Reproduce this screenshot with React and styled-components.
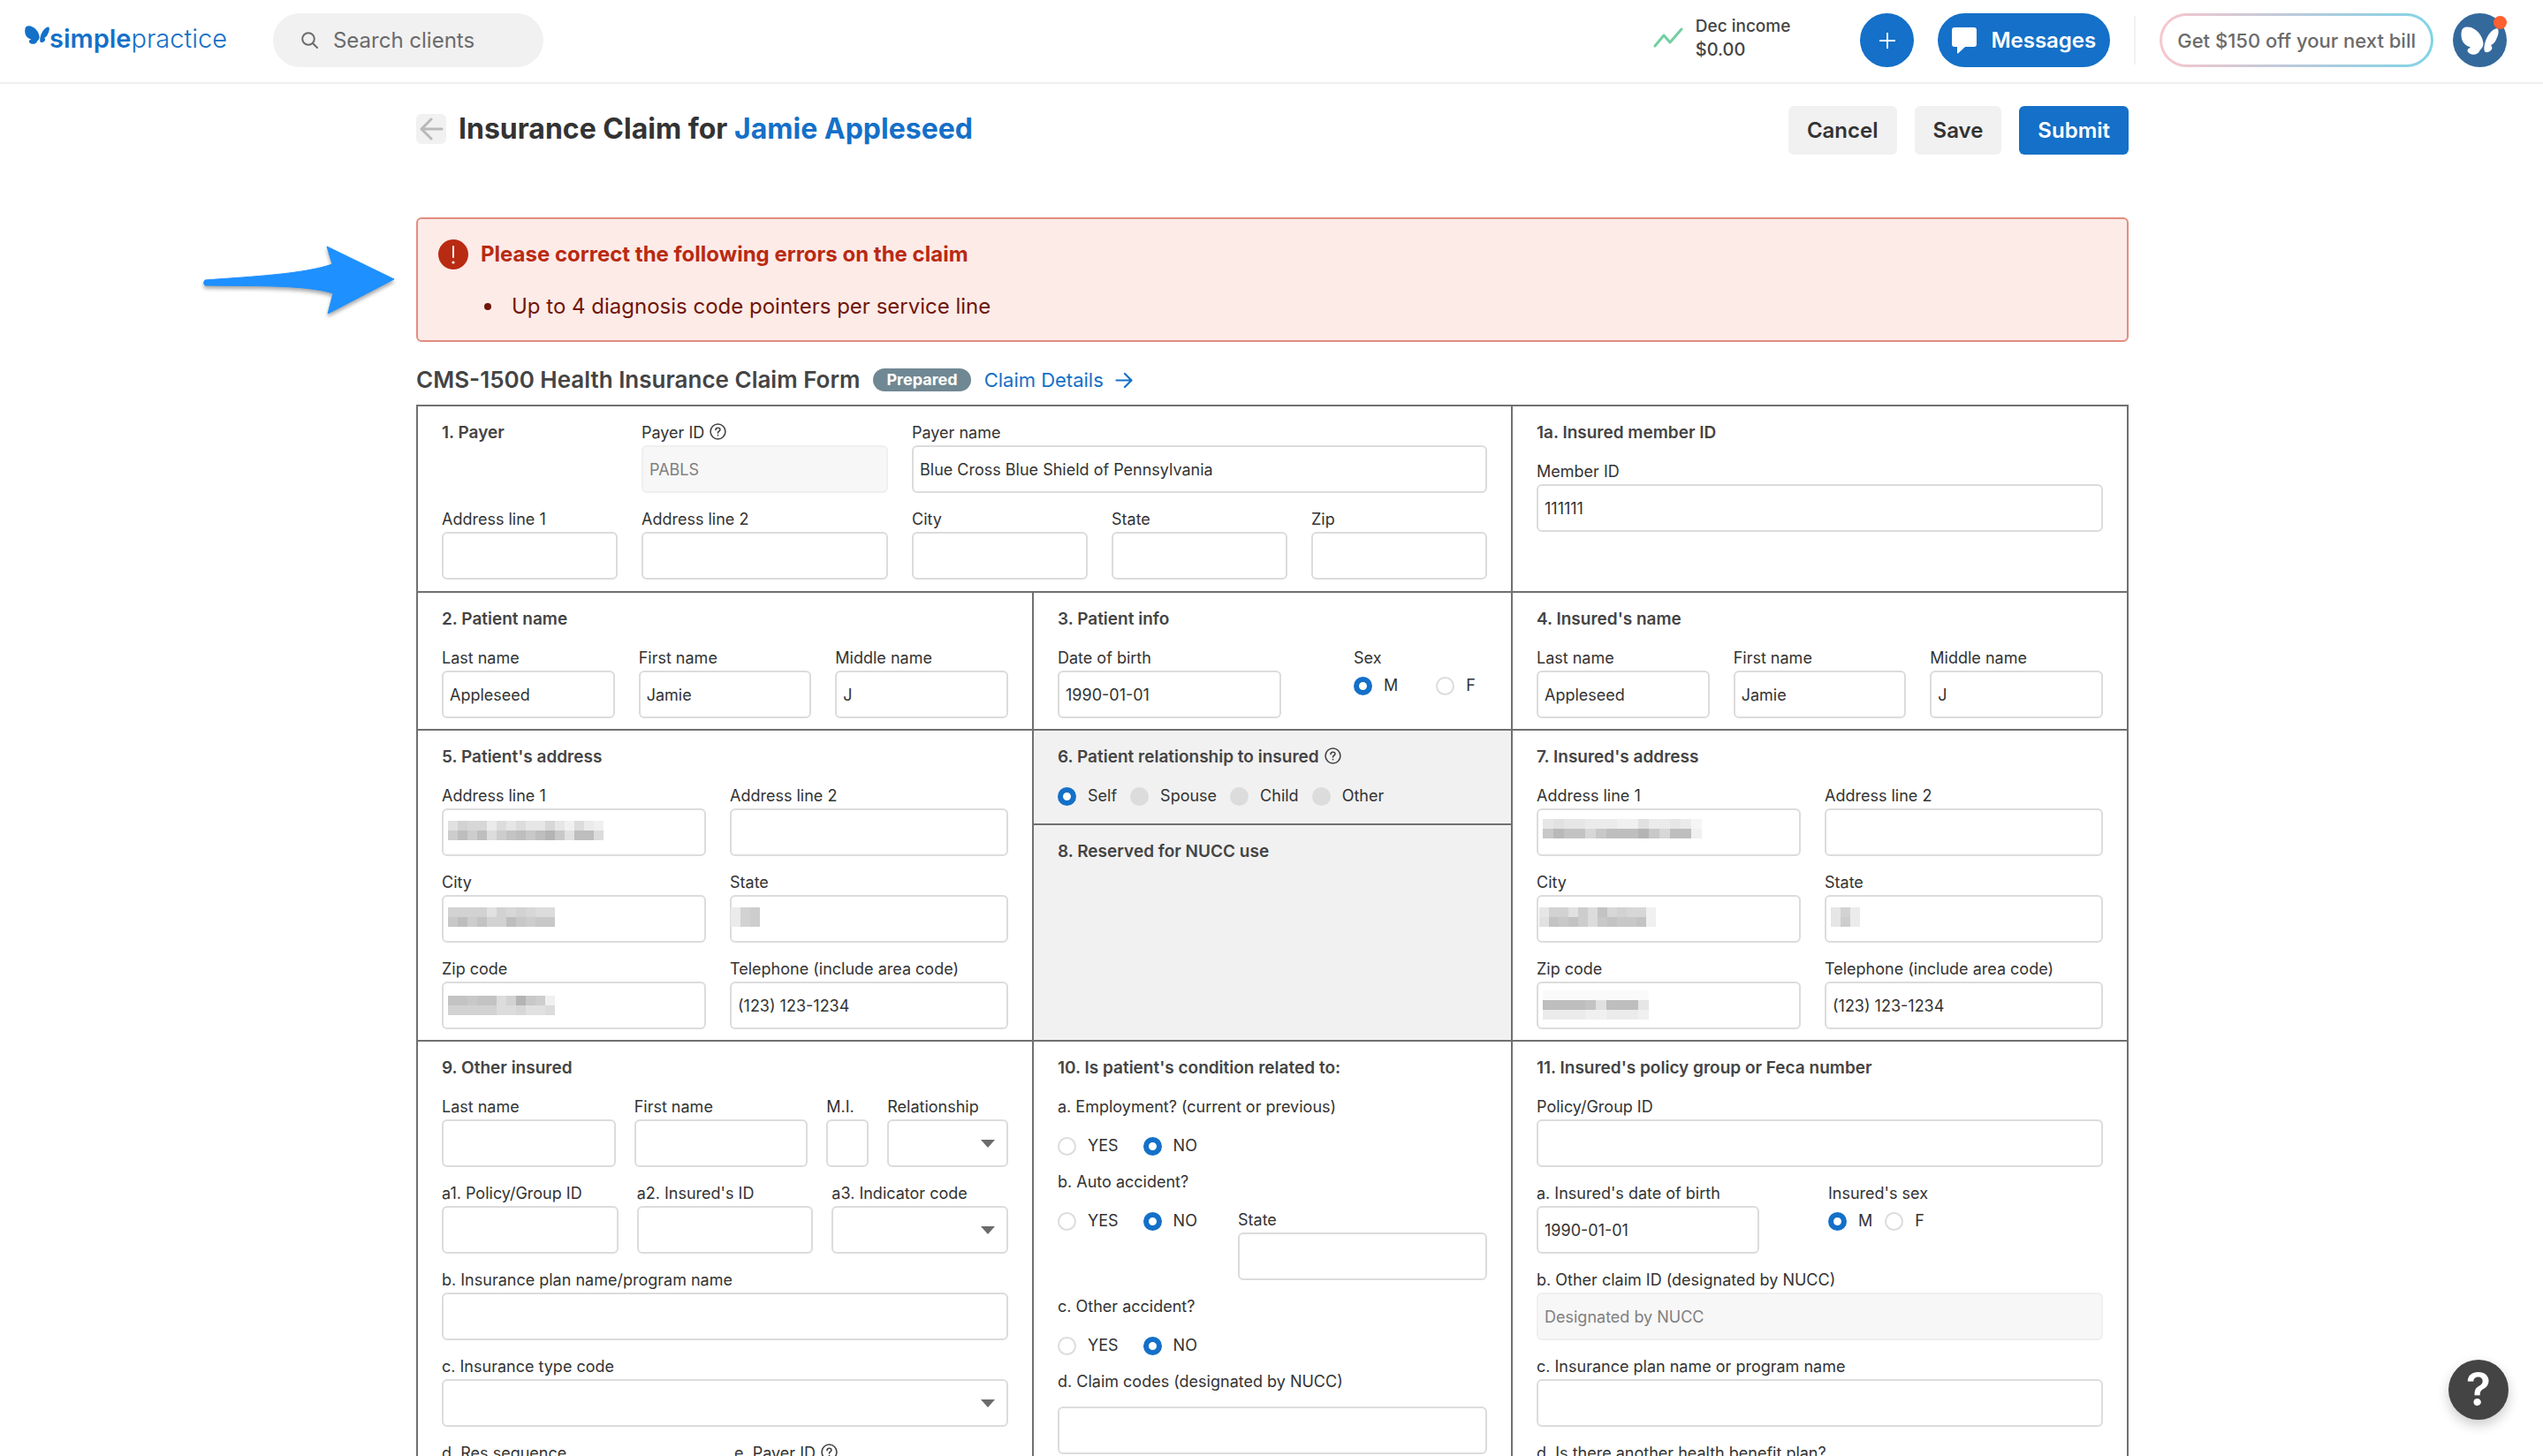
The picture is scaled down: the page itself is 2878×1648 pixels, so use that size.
import React, { useId } from 'react'
import styled, { createGlobalStyle, css } from 'styled-components'

const GlobalStyle = createGlobalStyle`
  :root {
    --blue: #1470c8;
    --ink: #333;
    --heading: #444;
    --muted: #6b6b6b;
    --line: #707070;
    --field-line: #dcdcdc;
    --panel: #f1f1f1;
  }
  * { box-sizing: border-box; }
  body {
    margin: 0;
    background: #fff;
    color: var(--ink);
    font-family: Inter, "Liberation Sans", sans-serif;
  }
  button, input, select { font-family: inherit; }
  a { color: var(--blue); text-decoration: none; }
`

const Shell = styled.div`
  display: flex;
  flex-direction: column;
  height: 100vh;
  overflow: hidden;
`

/* ---------- top bar ---------- */

const TopBar = styled.header`
  display: flex;
  flex: none;
  align-items: center;
  padding: 15px 41px 17px 28px;
  border-bottom: 2px solid #efefef;
`

const Logo = styled.a`
  display: flex;
  align-items: center;
  margin-right: 52px;
  padding-bottom: 3px;
  font-size: 29px;
  line-height: 36px;
  svg {
    width: 28px;
    height: 21px;
    margin-bottom: 9px;
  }
  strong { font-weight: 600; }
  span { font-weight: 300; }
`

const SearchBox = styled.div`
  display: flex;
  align-items: center;
  gap: 17px;
  width: 306px;
  height: 61px;
  padding: 0 28px 0 32px;
  border-radius: 31px;
  background: var(--panel);
  svg { flex: none; }
  input {
    width: 100%;
    min-width: 0;
    padding: 0;
    border: 0;
    outline: 0;
    background: none;
    font-size: 24px;
  }
  input::placeholder { color: var(--muted); opacity: 1; }
`

const TopActions = styled.div`
  display: flex;
  align-items: center;
  margin-left: auto;
`

const Income = styled.div`
  display: flex;
  align-items: center;
  gap: 14px;
  margin-right: 79px;
  padding-bottom: 6px;
  color: var(--heading);
  font-size: 19px;
  font-weight: 500;
  line-height: 27px;
  div div:last-child { font-size: 20px; }
`

const RoundButton = styled.button`
  display: flex;
  align-items: center;
  justify-content: center;
  gap: 16px;
  height: 61px;
  min-width: 61px;
  padding: ${props => props.$wide ? '0 16px' : '0'};
  border: 0;
  border-radius: 31px;
  background: var(--blue);
  color: #fff;
  font-size: 24px;
  font-weight: 600;
  & + & { margin-left: 27px; }
`

const Divider = styled.div`
  width: 2px;
  height: 55px;
  margin: 0 27px;
  background: #f1f1f1;
`

const OfferButton = styled.button`
  height: 61px;
  padding: 0 17px;
  border: 3px solid transparent;
  border-radius: 31px;
  background:
    linear-gradient(#fff, #fff) padding-box,
    linear-gradient(90deg, #f9c6cc, #b9cadb 50%, #7fd4e6) border-box;
  color: var(--muted);
  font-size: 22px;
  font-weight: 500;
`

const Avatar = styled.button`
  position: relative;
  display: flex;
  align-items: center;
  justify-content: center;
  width: 61px;
  height: 61px;
  margin-left: 22px;
  padding: 0;
  border: 0;
  border-radius: 50%;
  background: #34699c;
  color: #fff;
  svg { width: 43px; height: 32px; }
  &::after {
    content: '';
    position: absolute;
    top: 3px;
    right: 0;
    width: 15px;
    height: 15px;
    border-radius: 50%;
    background: #ff6030;
  }
`

/* ---------- page ---------- */

const Page = styled.main`
  flex: 1;
  min-height: 0;
  overflow-y: auto;
  scrollbar-width: none;
`

const Container = styled.div`
  max-width: 1978px;
  margin: 0 auto;
  padding: 25px 19px 40px 21px;
`

const TitleRow = styled.div`
  display: flex;
  align-items: center;
  gap: 14px;
  margin-bottom: 71px;
  h1 {
    margin: 0 auto 4px 0;
    color: var(--ink);
    font-size: 32px;
    font-weight: 700;
    line-height: 40px;
  }
`

const BackButton = styled.button`
  display: flex;
  align-items: center;
  justify-content: center;
  width: 34px;
  height: 34px;
  margin-bottom: 3px;
  padding: 0;
  border: 0;
  border-radius: 6px;
  background: var(--panel);
`

const ButtonGroup = styled.div`
  display: flex;
  gap: 20px;
`

const ActionButton = styled.button`
  height: 55px;
  padding: 0 21px;
  border: 0;
  border-radius: 6px;
  background: ${props => props.$primary ? 'var(--blue)' : 'var(--panel)'};
  color: ${props => props.$primary ? '#fff' : 'var(--ink)'};
  font-size: 24px;
  font-weight: 600;
`

const ErrorBox = styled.section`
  position: relative;
  padding: 22px 23px 23px;
  border: 2px solid #e28d80;
  border-radius: 6px;
  background: #fdebe8;
  h2 {
    display: flex;
    align-items: center;
    gap: 14px;
    margin: 0 0 26px;
    color: #b92a12;
    font-size: 24px;
    font-weight: 700;
    line-height: 36px;
  }
  ul {
    margin: 0;
    padding-left: 52px;
    color: #70160a;
    font-size: 24px;
    line-height: 30px;
    list-style: none;
  }
  li {
    display: flex;
    align-items: center;
    gap: 23px;
  }
  li::before {
    content: '';
    width: 8px;
    height: 8px;
    border-radius: 50%;
    background: currentColor;
  }
`

/* callout arrow that sits outside the left edge of the alert */
const Pointer = styled.svg`
  position: absolute;
  top: 28px;
  left: -246px;
  filter: drop-shadow(0 3px 2px rgba(0, 0, 0, 0.35));
`

const FormTitle = styled.div`
  display: flex;
  align-items: center;
  gap: 15px;
  margin: 27px 0 12px;
  h2 {
    margin: 0;
    color: var(--heading);
    font-size: 26px;
    font-weight: 600;
    line-height: 32px;
  }
  a {
    display: flex;
    align-items: center;
    gap: 13px;
    font-size: 22px;
  }
`

const Badge = styled.span`
  padding: 0 15px;
  border-radius: 13px;
  background: #708893;
  color: #fff;
  font-size: 18px;
  font-weight: 700;
  line-height: 26px;
`

/* ---------- claim form ---------- */

// the 2px gaps let the grid background through as the ruled lines
const ClaimForm = styled.form`
  display: grid;
  grid-template-columns: minmax(0, 695fr) minmax(0, 540fr) minmax(0, 695fr);
  gap: 2px;
  border: 2px solid var(--line);
  background: var(--line);
`

const Cell = styled.section`
  grid-column: span ${props => props.$span || 1};
  padding: 19px 27px ${props => props.$bottom || 12}px;
  background: ${props => props.$shaded ? 'var(--panel)' : '#fff'};
`

const SplitCell = styled.div`
  display: flex;
  flex-direction: column;
  gap: 2px;
  ${Cell}:last-child { flex: 1; }
`

const CellTitle = styled.h3`
  display: flex;
  gap: 6px;
  margin: 0 0 ${props => props.$inline ? 0 : 22}px;
  color: var(--heading);
  font-size: 19px;
  font-weight: 600;
  line-height: 22px;
`

const Stack = styled.div`
  display: grid;
  gap: 19px;
`

const Row = styled.div`
  display: grid;
  grid-template-columns: ${props => props.$cols};
  column-gap: ${props => props.$gap || 27}px;
  row-gap: 19px;
`

const FieldBox = styled.div`
  grid-column: span ${props => props.$span || 1};
  min-width: 0;
`

const labelText = css`
  color: var(--ink);
  font-size: 18px;
  line-height: 22px;
`

const Label = styled.label`
  ${labelText}
  display: flex;
  gap: 6px;
  margin-bottom: 3px;
  white-space: nowrap;
`

const Control = styled.div`
  position: relative;
`

const controlStyle = css`
  display: block;
  width: 100%;
  height: 54px;
  padding: 0 7px;
  border: 2px solid var(--field-line);
  border-radius: 6px;
  background: #fff;
  color: var(--ink);
  font-size: 18px;
`

const TextInput = styled.input`
  ${controlStyle}
  &:disabled {
    border-color: #efefef;
    background: #f7f7f7;
    color: #808080;
  }
`

const SelectInput = styled.select`
  ${controlStyle}
  appearance: none;
`

const Caret = styled.svg`
  position: absolute;
  top: 23px;
  right: 15px;
  pointer-events: none;
`

const Mosaic = styled.svg`
  position: absolute;
  top: ${props => props.$top}px;
  left: ${props => props.$left}px;
`

const RadioGroup = styled.fieldset`
  min-width: 0;
  margin: 0;
  padding: 0;
  border: 0;
  legend {
    ${labelText}
    margin-bottom: ${props => props.$legendGap}px;
    padding: 0;
    white-space: nowrap;
  }
`

const RadioItems = styled.div`
  display: flex;
  gap: ${props => props.$gap}px;
`

const RadioLabel = styled.label`
  ${labelText}
  display: flex;
  align-items: center;
  gap: 13px;
  input {
    appearance: none;
    width: 21px;
    height: 21px;
    margin: 0;
    border: 2px solid var(--field-line);
    border-radius: 50%;
    background: #fff;
  }
  input:checked { border: 6px solid var(--blue); }
  input:disabled { background: var(--field-line); }
`

const AccidentRow = styled.div`
  display: grid;
  grid-template-columns: 204fr 282fr;
`

const AccidentState = styled.div`
  padding-top: 43px;
`

const ClaimCodes = styled.div`
  ${Label} { margin-bottom: 17px; }
`

const HelpButton = styled.button`
  position: fixed;
  right: 39px;
  bottom: 41px;
  width: 68px;
  height: 68px;
  padding: 0;
  border: 0;
  border-radius: 50%;
  background: #444;
  box-shadow: 0 6px 14px rgba(0, 0, 0, 0.2);
  color: #fff;
  font-size: 52px;
  font-weight: 600;
  line-height: 68px;
`

/* ---------- icons ---------- */

const Butterfly = () => (
  <svg viewBox="76 76 128 96" fill="currentColor" aria-hidden="true">
    <path d="M78 92C80 78 95 74 112 80C136 90 150 112 152 134C152 144 146 152 140 157C136 168 126 172 116 171C104 170 97 163 98 156C100 150 106 150 109 146C92 142 72 128 78 92Z" />
    <path d="M198 83C206 84 204 102 198 114C193 128 186 136 178 139C180 144 184 148 180 154C176 161 164 166 158 162C153 158 154 144 158 130C165 106 182 84 198 83Z" />
  </svg>
)

const SearchIcon = () => (
  <svg width="19" height="19" viewBox="0 0 19 19" fill="none" stroke="#6b6b6b" strokeWidth="2" strokeLinecap="round">
    <circle cx="8" cy="8" r="6.8" />
    <path d="M13 13L18 18" />
  </svg>
)

const TrendIcon = () => (
  <svg width="34" height="23" viewBox="0 0 34 23" fill="none" stroke="#72cfa2" strokeWidth="3" strokeLinejoin="round" strokeLinecap="round">
    <path d="M2 21L12 9L19 17L32 2" />
  </svg>
)

const BubbleIcon = () => (
  <svg width="28" height="30" viewBox="0 0 28 30" fill="#fff">
    <path d="M3 0H25Q28 0 28 3V19Q28 22 25 22H15L7 29.500Q6 30 6 28V22H3Q0 22 0 19V3Q0 0 3 0Z" />
  </svg>
)

const PlusIcon = () => (
  <svg width="20" height="20" viewBox="0 0 20 20" stroke="#fff" strokeWidth="2">
    <path d="M10 1V19M1 10H19" />
  </svg>
)

const BackIcon = () => (
  <svg width="28" height="26" viewBox="0 0 28 26" fill="none" stroke="#b9b9b9" strokeWidth="3" strokeLinecap="round" strokeLinejoin="round">
    <path d="M14 2L3 13L14 24M3 13H26" />
  </svg>
)

const ArrowRight = () => (
  <svg width="20" height="19" viewBox="0 0 20 19" fill="none" stroke="currentColor" strokeWidth="2.200" strokeLinecap="round" strokeLinejoin="round">
    <path d="M1.500 9.500H18M11 2L18.500 9.500L11 17" />
  </svg>
)

const AlertIcon = () => (
  <svg width="34" height="34" viewBox="0 0 34 34">
    <circle cx="17" cy="17" r="17" fill="#b92a12" />
    <path d="M17 8V20" stroke="#fff" strokeWidth="2" strokeLinecap="round" />
    <circle cx="17" cy="26" r="1.600" fill="#fff" />
  </svg>
)

const HintIcon = () => (
  <svg width="19" height="19" viewBox="0 0 18 18" fill="none" stroke="#444" strokeWidth="1.500">
    <circle cx="9" cy="9" r="8" />
    <path d="M6.600 7.200Q6.700 4.900 9 4.900Q11.300 4.900 11.300 6.800Q11.300 8 10 8.800Q9 9.400 9 10.500" strokeLinecap="round" />
    <circle cx="9" cy="12.900" r="0.900" fill="#444" stroke="none" />
  </svg>
)

/* ---------- fields ---------- */

// rows are strings of hex digits, one grey level for each block
function Redacted({ rows, left = 7, top = 14, size = 11 }) {
  return (
    <Mosaic
      $left={left}
      $top={top}
      width={rows[0].length * size}
      height={rows.length * 11}
      shapeRendering="crispEdges"
    >
      {rows.map((row, y) => [...row].map((level, x) => {
        const grey = 180 + parseInt(level, 16) * 5
        return (
          <rect key={`${x}-${y}`} x={x * size} y={y * 11} width={size} height="11" fill={`rgb(${grey},${grey},${grey})`} />
        )
      }))}
    </Mosaic>
  )
}

function Field({ label, value, span, disabled, hint, options, redacted }) {
  const id = useId()
  return (
    <FieldBox $span={span}>
      <Label htmlFor={id}>{label}{hint && <HintIcon />}</Label>
      <Control>
        {options ? (
          <>
            <SelectInput id={id} defaultValue=""><option value=""></option></SelectInput>
            <Caret width="16" height="9" viewBox="0 0 16 9" fill="#6b6b6b"><path d="M0 0H16L8 9Z" /></Caret>
          </>
        ) : (
          <TextInput id={id} type="text" defaultValue={value} disabled={disabled} />
        )}
        {redacted && <Redacted {...redacted} />}
      </Control>
    </FieldBox>
  )
}

function Radios({ legend, legendGap = 9, gap, name, options, checked, disabled }) {
  return (
    <RadioGroup $legendGap={legendGap} aria-label={legend ? undefined : name}>
      {legend && <legend>{legend}</legend>}
      <RadioItems $gap={gap}>
        {options.map(option => (
          <RadioLabel key={option}>
            <input
              type="radio"
              name={name}
              defaultChecked={option === checked}
              disabled={disabled && option !== checked}
            />
            {option}
          </RadioLabel>
        ))}
      </RadioItems>
    </RadioGroup>
  )
}

function YesNo({ legend, name }) {
  return <Radios legend={legend} legendGap={22} name={name} options={['YES', 'NO']} checked="NO" gap={28} />
}

function NameCell({ title }) {
  return (
    <Cell>
      <CellTitle>{title}</CellTitle>
      <Row $cols="repeat(3, minmax(0, 1fr))">
        <Field label="Last name" value="Appleseed" />
        <Field label="First name" value="Jamie" />
        <Field label="Middle name" value="J" />
      </Row>
    </Cell>
  )
}

function AddressCell({ title, line, city, state, zip }) {
  return (
    <Cell>
      <CellTitle>{title}</CellTitle>
      <Row $cols="minmax(0, 299fr) minmax(0, 315fr)">
        <Field label="Address line 1" redacted={line} />
        <Field label="Address line 2" />
        <Field label="City" redacted={city} />
        <Field label="State" redacted={state} />
        <Field label="Zip code" redacted={zip} />
        <Field label="Telephone (include area code)" value="(123) 123-1234" />
      </Row>
    </Cell>
  )
}

const patientAddress = {
  line: { rows: ['9677b8a8aa7ac8bc', '5252853242049228'] },
  city: { rows: ['66669676788', '42536624544'] },
  state: { rows: ['b65', 'b65'], left: 1 },
  zip: { rows: ['3343386045c', '66666887998'], top: 16 },
}

const insuredAddress = {
  line: { rows: ['a9aabbbcc9bbabd', '41337422204722c'], top: 12, size: 12 },
  city: { rows: ['a6695837677c', '93435843443c'], left: 3 },
  state: { rows: ['a6b', 'a5b'], left: 7 },
  zip: { rows: ['eeeeeeeeee', '222239222a', 'bbbbccbbbc'], top: 10, size: 12 },
}

function Header() {
  return (
    <TopBar>
      <Logo href="#">
        <Butterfly />
        <strong>simple</strong><span>practice</span>
      </Logo>
      <SearchBox>
        <SearchIcon />
        <input type="search" placeholder="Search clients" aria-label="Search clients" />
      </SearchBox>
      <TopActions>
        <Income>
          <TrendIcon />
          <div>
            <div>Dec income</div>
            <div>$0.00</div>
          </div>
        </Income>
        <RoundButton type="button" aria-label="Add"><PlusIcon /></RoundButton>
        <RoundButton type="button" $wide><BubbleIcon />Messages</RoundButton>
        <Divider />
        <OfferButton type="button">Get $150 off your next bill</OfferButton>
        <Avatar type="button" aria-label="Account"><Butterfly /></Avatar>
      </TopActions>
    </TopBar>
  )
}

export default function App() {
  return (
    <Shell>
      <GlobalStyle />
      <Header />
      <Page>
        <Container>
          <TitleRow>
            <BackButton type="button" aria-label="Back"><BackIcon /></BackButton>
            <h1>Insurance Claim for <a href="#">Jamie Appleseed</a></h1>
            <ButtonGroup>
              <ActionButton type="button">Cancel</ActionButton>
              <ActionButton type="button">Save</ActionButton>
              <ActionButton type="button" $primary>Submit</ActionButton>
            </ButtonGroup>
          </TitleRow>

          <ErrorBox>
            <Pointer width="228" height="84" viewBox="0 0 228 84" fill="#1e90ff">
              <path d="M5 41C60 37 118 34 149 23L143 3L219 40L144 79L150 56C118 46 60 48 5 47Q2 44 5 41Z" stroke="#1e90ff" strokeLinejoin="round" />
            </Pointer>
            <h2><AlertIcon />Please correct the following errors on the claim</h2>
            <ul>
              <li>Up to 4 diagnosis code pointers per service line</li>
            </ul>
          </ErrorBox>

          <FormTitle>
            <h2>CMS-1500 Health Insurance Claim Form</h2>
            <Badge>Prepared</Badge>
            <a href="#">Claim Details <ArrowRight /></a>
          </FormTitle>

          <ClaimForm>
            <Cell $span={2} $bottom={13}>
              <Row $cols="minmax(0, 199fr) minmax(0, 279fr) repeat(3, minmax(0, 199fr))">
                <CellTitle $inline>1. Payer</CellTitle>
                <Field label="Payer ID" value="PABLS" hint disabled />
                <Field label="Payer name" value="Blue Cross Blue Shield of Pennsylvania" span={3} />
                <Field label="Address line 1" />
                <Field label="Address line 2" />
                <Field label="City" />
                <Field label="State" />
                <Field label="Zip" />
              </Row>
            </Cell>
            <Cell>
              <CellTitle>1a. Insured member ID</CellTitle>
              <Field label="Member ID" value="111111" />
            </Cell>

            <NameCell title="2. Patient name" />
            <Cell>
              <CellTitle>3. Patient info</CellTitle>
              <Row $cols="253fr 151fr" $gap={82}>
                <Field label="Date of birth" value="1990-01-01" />
                <Radios legend="Sex" name="patient-sex" options={['M', 'F']} checked="M" gap={43} />
              </Row>
            </Cell>
            <NameCell title="4. Insured's name" />

            <AddressCell title="5. Patient's address" {...patientAddress} />
            <SplitCell>
              <Cell $shaded $bottom={20}>
                <CellTitle>6. Patient relationship to insured<HintIcon /></CellTitle>
                <Radios
                  name="relationship"
                  options={['Self', 'Spouse', 'Child', 'Other']}
                  checked="Self"
                  gap={15}
                  disabled
                />
              </Cell>
              <Cell $shaded>
                <CellTitle>8. Reserved for NUCC use</CellTitle>
              </Cell>
            </SplitCell>
            <AddressCell title="7. Insured's address" {...insuredAddress} />

            <Cell>
              <CellTitle>9. Other insured</CellTitle>
              <Stack>
                <Row $cols="minmax(0, 197fr) minmax(0, 197fr) minmax(0, 48fr) minmax(0, 137fr)" $gap={21}>
                  <Field label="Last name" />
                  <Field label="First name" />
                  <Field label="M.I." />
                  <Field label="Relationship" options />
                </Row>
                <Row $cols="repeat(3, minmax(0, 1fr))" $gap={21}>
                  <Field label="a1. Policy/Group ID" />
                  <Field label="a2. Insured's ID" />
                  <Field label="a3. Indicator code" options />
                </Row>
                <Field label="b. Insurance plan name/program name" />
                <Field label="c. Insurance type code" options />
                <Row $cols="repeat(2, minmax(0, 1fr))" $gap={21}>
                  <Field label="d. Res sequence" options />
                  <Field label="e. Payer ID" hint />
                </Row>
              </Stack>
            </Cell>
            <Cell>
              <CellTitle>10. Is patient's condition related to:</CellTitle>
              <Stack>
                <YesNo legend="a. Employment? (current or previous)" name="employment" />
                <AccidentRow>
                  <YesNo legend="b. Auto accident?" name="auto-accident" />
                  <AccidentState><Field label="State" /></AccidentState>
                </AccidentRow>
                <YesNo legend="c. Other accident?" name="other-accident" />
                <ClaimCodes><Field label="d. Claim codes (designated by NUCC)" /></ClaimCodes>
              </Stack>
            </Cell>
            <Cell>
              <CellTitle>11. Insured's policy group or Feca number</CellTitle>
              <Stack>
                <Field label="Policy/Group ID" />
                <Row $cols="252fr 311fr" $gap={78}>
                  <Field label="a. Insured's date of birth" value="1990-01-01" />
                  <Radios legend="Insured's sex" name="insured-sex" options={['M', 'F']} checked="M" gap={14} />
                </Row>
                <Field label="b. Other claim ID (designated by NUCC)" value="Designated by NUCC" disabled />
                <Field label="c. Insurance plan name or program name" />
                <YesNo legend="d. Is there another health benefit plan?" name="other-plan" />
              </Stack>
            </Cell>
          </ClaimForm>
        </Container>
      </Page>
      <HelpButton type="button" aria-label="Help">?</HelpButton>
    </Shell>
  )
}
